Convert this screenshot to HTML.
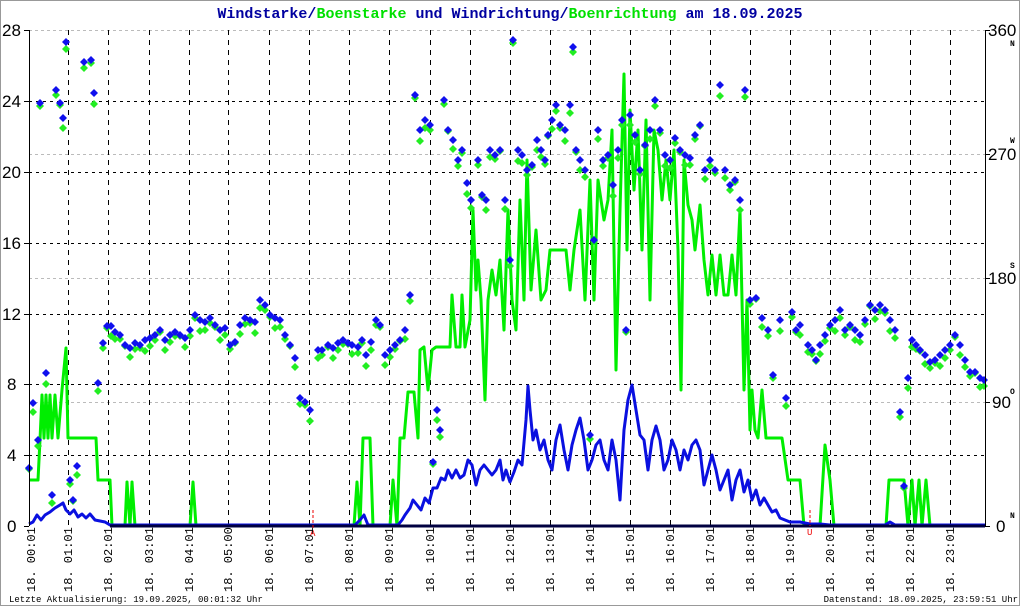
<!DOCTYPE html>
<html><head><meta charset="utf-8"><style>
html,body{margin:0;padding:0;background:#fff}
svg{display:block}
text{font-family:"Liberation Mono","DejaVu Sans Mono",monospace}
text.sans{font-family:"Liberation Sans",sans-serif}
</style></head><body>
<svg id="s" width="1020" height="606" viewBox="0 0 1020 606" xmlns="http://www.w3.org/2000/svg">
<rect x="0.5" y="0.5" width="1019" height="605" fill="#fff" stroke="#999"/>
<text x="510" y="18" text-anchor="middle" font-size="15" font-weight="bold" fill="#0000a0">Windstarke/<tspan fill="#00e000">Boenstarke</tspan> und Windrichtung/<tspan fill="#00e000">Boenrichtung</tspan> am 18.09.2025</text>
<g stroke="#bbb" stroke-dasharray="3,3" stroke-width="1">
<line x1="29" y1="30.5" x2="985" y2="30.5"/><line x1="29" y1="154.5" x2="985" y2="154.5"/><line x1="29" y1="278.5" x2="985" y2="278.5"/><line x1="29" y1="402.5" x2="985" y2="402.5"/>
</g>
<g stroke="#000" stroke-dasharray="3,4" stroke-width="1">
<line x1="29" y1="101.5" x2="985" y2="101.5"/><line x1="29" y1="172.5" x2="985" y2="172.5"/><line x1="29" y1="243.5" x2="985" y2="243.5"/><line x1="29" y1="314.5" x2="985" y2="314.5"/><line x1="29" y1="384.5" x2="985" y2="384.5"/><line x1="29" y1="455.5" x2="985" y2="455.5"/>
</g>
<g id="vg" stroke="#000" stroke-dasharray="5,5" stroke-width="1"></g>
<polyline fill="none" stroke="#00ee00" stroke-width="3" stroke-linejoin="round" points="29,480 38,480 40,440 42,395 44,438 46,395 48,438 50,395 52,438 55,395 58,438 62,390 66,348 68,438 72,438 96,438 98,480 110,480 112,526 125,526 127,482 130,526 132,482 135,526 190,526 193,482 196,526 354,526 357,482 360,526 363,438 370,438 373,526 390,526 393,480 397,526 400,438 404,438 408,392 414,392 418,438 420,350 424,347 428,390 432,350 436,347 450,347 452,295 456,347 460,347 462,295 465,347 470,320 473,210 476,290 478,260 481,300 485,400 488,300 492,270 496,295 500,260 504,330 508,210 512,300 516,330 520,200 524,300 527,160 531,290 536,230 541,300 546,290 550,250 566,250 570,290 574,250 580,210 585,300 590,180 594,300 598,180 604,220 608,200 612,130 616,370 620,210 624,74 627,250 630,110 634,190 638,130 642,250 646,120 650,300 654,130 658,150 662,200 666,160 670,200 674,150 678,250 681,390 684,160 688,205 692,220 695,250 700,205 704,260 708,295 712,255 716,295 720,255 724,295 728,295 732,255 736,295 740,210 744,390 747,300 750,430 752,390 755,430 758,438 762,390 766,438 782,438 788,480 800,480 804,526 820,526 825,445 830,480 834,526 886,526 889,480 904,480 908,526 912,480 915,526 919,480 922,526 926,480 930,526 985,526"/>
<polyline fill="none" stroke="#0a10e0" stroke-width="3" stroke-linejoin="round" points="29,524 33,522 37,515 41,520 45,515 50,512 55,508 60,505 63,503 66,510 70,514 74,510 78,517 82,514 86,518 90,514 95,520 100,521 105,522 110,525 355,525 360,520 364,515 368,525 398,525 402,520 405,515 410,508 413,500 417,505 421,510 425,498 429,503 433,488 437,488 441,478 445,480 448,470 452,478 456,470 460,478 464,475 468,460 472,465 476,485 480,470 484,465 488,470 492,475 496,470 500,460 503,480 506,470 510,482 514,472 518,460 522,465 526,420 528,386 530,410 533,440 536,430 540,450 544,440 548,460 552,470 556,440 560,425 564,450 568,470 572,445 576,430 580,418 584,440 588,470 592,460 596,445 600,440 604,460 608,470 612,440 616,460 620,500 624,430 628,400 632,385 636,410 640,435 644,440 648,470 652,440 656,426 660,440 664,470 668,460 672,440 676,450 680,470 684,450 688,460 692,445 696,440 700,450 704,485 708,470 712,455 716,470 720,490 724,480 728,470 732,500 736,480 740,470 744,492 748,480 752,500 756,490 760,505 764,498 768,505 772,512 776,510 780,518 785,520 790,522 800,522 810,524 820,524 830,525 885,525 890,522 895,525 985,525"/>
<line x1="110" y1="526" x2="985" y2="526" stroke="#000040" stroke-width="3"/>
<line x1="313" y1="510" x2="313" y2="528" stroke="#e00" stroke-dasharray="3,2"/>
<text x="310" y="536" font-size="9" fill="#e00">A</text>
<line x1="810" y1="510" x2="810" y2="526" stroke="#e00" stroke-dasharray="3,2"/>
<text x="807" y="535" font-size="9" fill="#e00">U</text>
<g id="dm"></g>
<line x1="29.5" y1="30" x2="29.5" y2="526" stroke="#000"/>
<g stroke="#000"><line x1="24" y1="30.5" x2="29" y2="30.5"/><line x1="24" y1="101.5" x2="29" y2="101.5"/><line x1="24" y1="172.5" x2="29" y2="172.5"/><line x1="24" y1="243.5" x2="29" y2="243.5"/><line x1="24" y1="314.5" x2="29" y2="314.5"/><line x1="24" y1="384.5" x2="29" y2="384.5"/><line x1="24" y1="455.5" x2="29" y2="455.5"/><line x1="24" y1="526.5" x2="29" y2="526.5"/></g>
<line x1="985.5" y1="30" x2="985.5" y2="526" stroke="#000"/>
<g stroke="#000"><line x1="985" y1="30.5" x2="990" y2="30.5"/><line x1="985" y1="154.5" x2="990" y2="154.5"/><line x1="985" y1="278.5" x2="990" y2="278.5"/><line x1="985" y1="402.5" x2="990" y2="402.5"/><line x1="985" y1="526.5" x2="990" y2="526.5"/></g>
<g font-size="17" fill="#000">
<text class="sans" x="2" y="36">28</text><text class="sans" x="2" y="107">24</text><text class="sans" x="2" y="178">20</text><text class="sans" x="2" y="249">16</text><text class="sans" x="2" y="320">12</text><text class="sans" x="7" y="390">8</text><text class="sans" x="7" y="461">4</text><text class="sans" x="7" y="532">0</text>
<text class="sans" x="988" y="36">360</text><text class="sans" x="988" y="160">270</text><text class="sans" x="988" y="284">180</text><text class="sans" x="992" y="408">90</text><text class="sans" x="996" y="532">0</text>
</g>
<g font-size="8" font-weight="bold" fill="#000"><text x="1010" y="46">N</text><text x="1010" y="143">W</text><text x="1010" y="268">S</text><text x="1010" y="394">O</text><text x="1010" y="518">N</text></g>
<g id="xl" font-size="12" fill="#000"></g>
<text x="9" y="602" font-size="9" fill="#000">Letzte Aktualisierung: 19.09.2025, 00:01:32 Uhr</text>
<text x="1018" y="602" font-size="9" fill="#000" text-anchor="end">Datenstand: 18.09.2025, 23:59:51 Uhr</text>
</svg>
<script>
var NS="http://www.w3.org/2000/svg";
function el(t,a,p){var e=document.createElementNS(NS,t);for(var k in a)e.setAttribute(k,a[k]);p.appendChild(e);return e;}
var vg=document.getElementById('vg'),xl=document.getElementById('xl');
var xs=[31,68,108,149,189,228,269,309,349,389,430,470,510,550,590,630,670,710,750,790,830,870,910,950];
for(var h=0;h<24;h++){var x=xs[h];if(h>0)el('line',{x1:x+.5,y1:30,x2:x+.5,y2:526},vg);
var t=el('text',{transform:'translate('+(x+4)+',592) rotate(-90)'},xl);t.textContent='18. '+(h<10?'0':'')+h+':'+(h==5?'00':'01');}
var B=[29,468,33,403,38,440,40,103,46,373,52,495,56,90,60,103,63,118,66,42,70,480,73,500,77,466,84,62,91,60,94,93,98,383,103,343,107,326,111,326,115,332,120,335,125,345,130,348,135,343,140,345,145,340,150,338,155,335,160,330,165,340,170,335,175,332,180,335,185,338,190,330,195,315,200,320,205,322,210,318,215,325,220,330,225,328,230,345,235,342,240,325,245,318,250,320,255,322,260,300,265,305,270,315,275,318,280,320,285,335,290,345,295,358,300,398,305,402,310,410,318,350,322,350,328,345,333,348,338,343,343,340,348,343,352,345,358,347,362,340,366,355,371,342,376,320,380,325,385,355,390,350,395,345,400,340,405,330,410,295,415,95,420,130,425,120,430,125,433,462,437,410,440,430,444,100,448,130,453,140,458,160,462,150,467,183,471,200,478,160,482,195,486,200,490,150,495,155,500,150,505,200,510,260,513,40,518,150,522,155,527,170,532,165,537,140,541,150,545,160,548,135,552,120,556,105,560,125,565,130,570,105,573,47,576,150,580,160,585,170,590,435,594,240,598,130,603,160,608,155,613,185,618,150,622,120,626,330,630,115,635,135,640,170,645,145,650,130,655,100,660,130,665,155,670,160,675,138,680,150,685,155,690,158,695,135,700,125,705,170,710,160,715,170,720,85,725,170,730,185,735,180,740,200,745,90,750,300,756,298,762,318,768,330,773,375,780,320,786,398,792,312,796,330,800,325,808,345,812,350,816,360,820,345,825,335,830,325,835,320,840,310,845,330,850,325,855,330,860,335,865,320,870,305,875,310,880,305,885,310,890,320,895,330,900,412,904,486,908,378,912,340,916,345,920,350,925,355,930,362,935,360,940,355,945,350,950,345,955,335,960,345,965,360,970,372,975,372,980,378,984,380];
var dm=document.getElementById('dm');
function d(x,y,c){el('path',{d:'M'+x+' '+(y-4)+'L'+(x+4)+' '+y+'L'+x+' '+(y+4)+'L'+(x-4)+' '+y+'Z',fill:c},dm);}
for(var i=0;i<B.length;i+=2){var off=((i*37)%11)-3;d(B[i],B[i+1]+off+4,'#22ee22');}
for(var i=0;i<B.length;i+=2){d(B[i],B[i+1],'#1010ee');}
</script>
</body></html>
